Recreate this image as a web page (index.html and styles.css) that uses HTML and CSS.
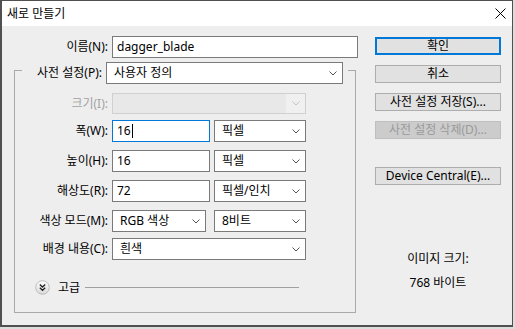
FILE: index.html
```html
<!DOCTYPE html>
<html lang="ko">
<head>
<meta charset="utf-8">
<title>새로 만들기</title>
<link rel="stylesheet" href="styles.css">
</head>
<body>
<div class="dialog">
  <div class="titlebar">
    <span class="title">새로 만들기</span>
    <svg class="close" width="11" height="11" viewBox="0 0 11 11"><path d="M0.5 0.5 L10.5 10.5 M10.5 0.5 L0.5 10.5" stroke="#000" stroke-width="1" fill="none"/></svg>
  </div>
  <div class="body">
    <div class="main">
      <div class="row name-row">
        <span class="lbl lbl-name">이름(N):</span>
        <div class="field input w-name">dagger_blade</div>
      </div>
      <div class="group">
        <div class="row preset-row">
          <span class="lbl lbl-preset">사전 설정(P):</span>
          <div class="field combo w-preset"><span>사용자 정의</span><svg class="chev" width="8" height="5" viewBox="0 0 8 5"><path d="M0.5 0.5 L4 4 L7.5 0.5" stroke="#555" fill="none"/></svg></div>
        </div>
        <div class="row size-row">
          <span class="lbl disabled">크기(I):</span>
          <div class="field combo combo-disabled w-full"><span></span><span class="dis-btn"><svg class="chev" width="8" height="5" viewBox="0 0 8 5"><path d="M0.5 0.5 L4 4 L7.5 0.5" stroke="#c4c4c4" fill="none"/></svg></span></div>
        </div>
        <div class="row w-row">
          <span class="lbl">폭(W):</span>
          <div class="field input focused w-num">16<span class="caret"></span></div>
          <div class="field combo w-unit"><span>픽셀</span><svg class="chev" width="8" height="5" viewBox="0 0 8 5"><path d="M0.5 0.5 L4 4 L7.5 0.5" stroke="#555" fill="none"/></svg></div>
        </div>
        <div class="row h-row">
          <span class="lbl">높이(H):</span>
          <div class="field input w-num">16</div>
          <div class="field combo w-unit"><span>픽셀</span><svg class="chev" width="8" height="5" viewBox="0 0 8 5"><path d="M0.5 0.5 L4 4 L7.5 0.5" stroke="#555" fill="none"/></svg></div>
        </div>
        <div class="row res-row">
          <span class="lbl">해상도(R):</span>
          <div class="field input w-num">72</div>
          <div class="field combo w-unit"><span>픽셀/인치</span><svg class="chev" width="8" height="5" viewBox="0 0 8 5"><path d="M0.5 0.5 L4 4 L7.5 0.5" stroke="#555" fill="none"/></svg></div>
        </div>
        <div class="row mode-row">
          <span class="lbl">색상 모드(M):</span>
          <div class="field combo w-mode"><span>RGB 색상</span><svg class="chev" width="8" height="5" viewBox="0 0 8 5"><path d="M0.5 0.5 L4 4 L7.5 0.5" stroke="#555" fill="none"/></svg></div>
          <div class="field combo w-unit bits"><span>8비트</span><svg class="chev" width="8" height="5" viewBox="0 0 8 5"><path d="M0.5 0.5 L4 4 L7.5 0.5" stroke="#555" fill="none"/></svg></div>
        </div>
        <div class="row bg-row">
          <span class="lbl">배경 내용(C):</span>
          <div class="field combo w-full"><span>흰색</span><svg class="chev" width="8" height="5" viewBox="0 0 8 5"><path d="M0.5 0.5 L4 4 L7.5 0.5" stroke="#555" fill="none"/></svg></div>
        </div>
        <div class="adv-row">
          <svg class="adv-icon" width="15" height="15" viewBox="0 0 15 15">
            <defs><linearGradient id="g" x1="0" y1="0" x2="0" y2="1"><stop offset="0" stop-color="#ffffff"/><stop offset="1" stop-color="#d8d8d8"/></linearGradient></defs>
            <circle cx="7.5" cy="7.5" r="6.8" fill="url(#g)" stroke="#b0b0b0" stroke-width="0.8"/>
            <path d="M4.8 4.6 L7.5 7.1 L10.2 4.6 M4.8 7.8 L7.5 10.3 L10.2 7.8" stroke="#222" stroke-width="1.3" fill="none"/>
          </svg>
          <span class="adv-text">고급</span>
          <span class="adv-line"></span>
        </div>
      </div>
    </div>
    <div class="side">
      <div class="btn default">확인</div>
      <div class="btn">취소</div>
      <div class="btn">사전 설정 저장(S)...</div>
      <div class="btn btn-disabled">사전 설정 삭제(D)...</div>
      <div class="btn btn-dc">Device Central(E)...</div>
      <div class="info info-label">이미지 크기:</div>
      <div class="info info-value">768 바이트</div>
    </div>
  </div>
</div>
</body>
</html>
```
FILE: styles.css
```css
* { box-sizing: border-box; }
html, body { margin: 0; padding: 0; }
body {
  width: 515px;
  height: 329px;
  background: #dcdcdc;
  font-family: "Noto Sans", "Noto Sans CJK KR", sans-serif;
  font-size: 12px;
  color: #000;
  overflow: hidden;
}
.dialog {
  width: 513px;
  height: 327px;
  background: #eeeeee;
  border: 1px solid #505050;
  border-left-width: 2px;
  border-bottom-width: 2px;
  display: flex;
  flex-direction: column;
}
.titlebar {
  height: 25px;
  flex: none;
  background: #ffffff;
  display: flex;
  align-items: center;
  justify-content: space-between;
  padding: 0 6px 0 5px;
}
.title { font-size: 12px; line-height: 16px; }
.close { display: block; }
.body {
  display: flex;
  flex: 1;
}
.main {
  width: 356px;
  padding-top: 10px;
}
.row {
  display: flex;
  align-items: center;
  height: 22px;
}
.lbl {
  flex: none;
  width: 93px;
  margin-right: 4px;
  text-align: right;
  white-space: nowrap;
  line-height: 16px;
}
.lbl-name { width: 106px; }
.lbl-preset { width: 80px; }
.lbl.disabled { color: #a3a3a3; }
.field {
  flex: none;
  height: 22px;
  background: #ffffff;
  border: 1px solid #7a7a7a;
  display: flex;
  align-items: center;
  line-height: 16px;
  white-space: nowrap;
}
.input { padding-left: 4px; }
.input.focused { border-color: #0078d7; }
.caret {
  display: inline-block;
  width: 1px;
  height: 14px;
  background: #000;
  margin-left: 1px;
}
.combo {
  padding: 0 5px 0 7px;
  justify-content: space-between;
}
.chev { display: block; flex: none; }
.combo-disabled {
  background: #e8e8e8;
  border-color: #d0d0d0;
  height: 21px;
  padding-right: 0;
}
.dis-btn {
  width: 19px;
  height: 19px;
  background: #f0f0f0;
  display: flex;
  align-items: center;
  justify-content: center;
  padding-left: 1px;
}
.w-name { width: 246px; }
.w-preset { width: 237px; }
.w-full { width: 194px; }
.w-num { width: 98px; }
.w-unit { width: 92px; margin-left: 4px; }
.w-mode { width: 94px; }
.bits { margin-left: 8px; }

.group {
  margin-top: 12px;
  margin-left: 12px;
  width: 342px;
  height: 243px;
  border: 1px solid #a9a9a9;
}
.preset-row {
  margin-top: -9px;
  margin-left: 7px;
  width: 326px;
  padding-right: 5px;
  background: #eeeeee;
}
.size-row { margin-top: 9px; height: 21px; }
.w-row { margin-top: 6px; }
.h-row { margin-top: 8px; }
.res-row { margin-top: 8px; }
.mode-row { margin-top: 8px; }
.bg-row { margin-top: 6px; }
.adv-row {
  margin-top: 20px;
  margin-left: 20px;
  height: 15px;
  display: flex;
  align-items: center;
}
.adv-icon { display: block; flex: none; }
.adv-text { margin-left: 8px; line-height: 16px; }
.adv-line {
  margin-left: 5px;
  width: 214px;
  height: 1px;
  background: #a0a0a0;
}

.side {
  margin-left: 17px;
  width: 126px;
  padding-top: 11px;
  display: flex;
  flex-direction: column;
}
.btn {
  height: 18px;
  margin-bottom: 10px;
  background: #e1e1e1;
  border: 1px solid #adadad;
  display: flex;
  align-items: center;
  justify-content: center;
  line-height: 16px;
  white-space: nowrap;
}
.btn.default { border: 2px solid #0078d7; }
.btn-disabled {
  background: #cccccc;
  border-color: #bfbfbf;
  color: #9a9a9a;
}
.btn-dc { margin-top: 18px; }
.info {
  text-align: center;
  line-height: 16px;
}
.info-label { margin-top: 56px; }
.info-value { margin-top: 8px; }
```
